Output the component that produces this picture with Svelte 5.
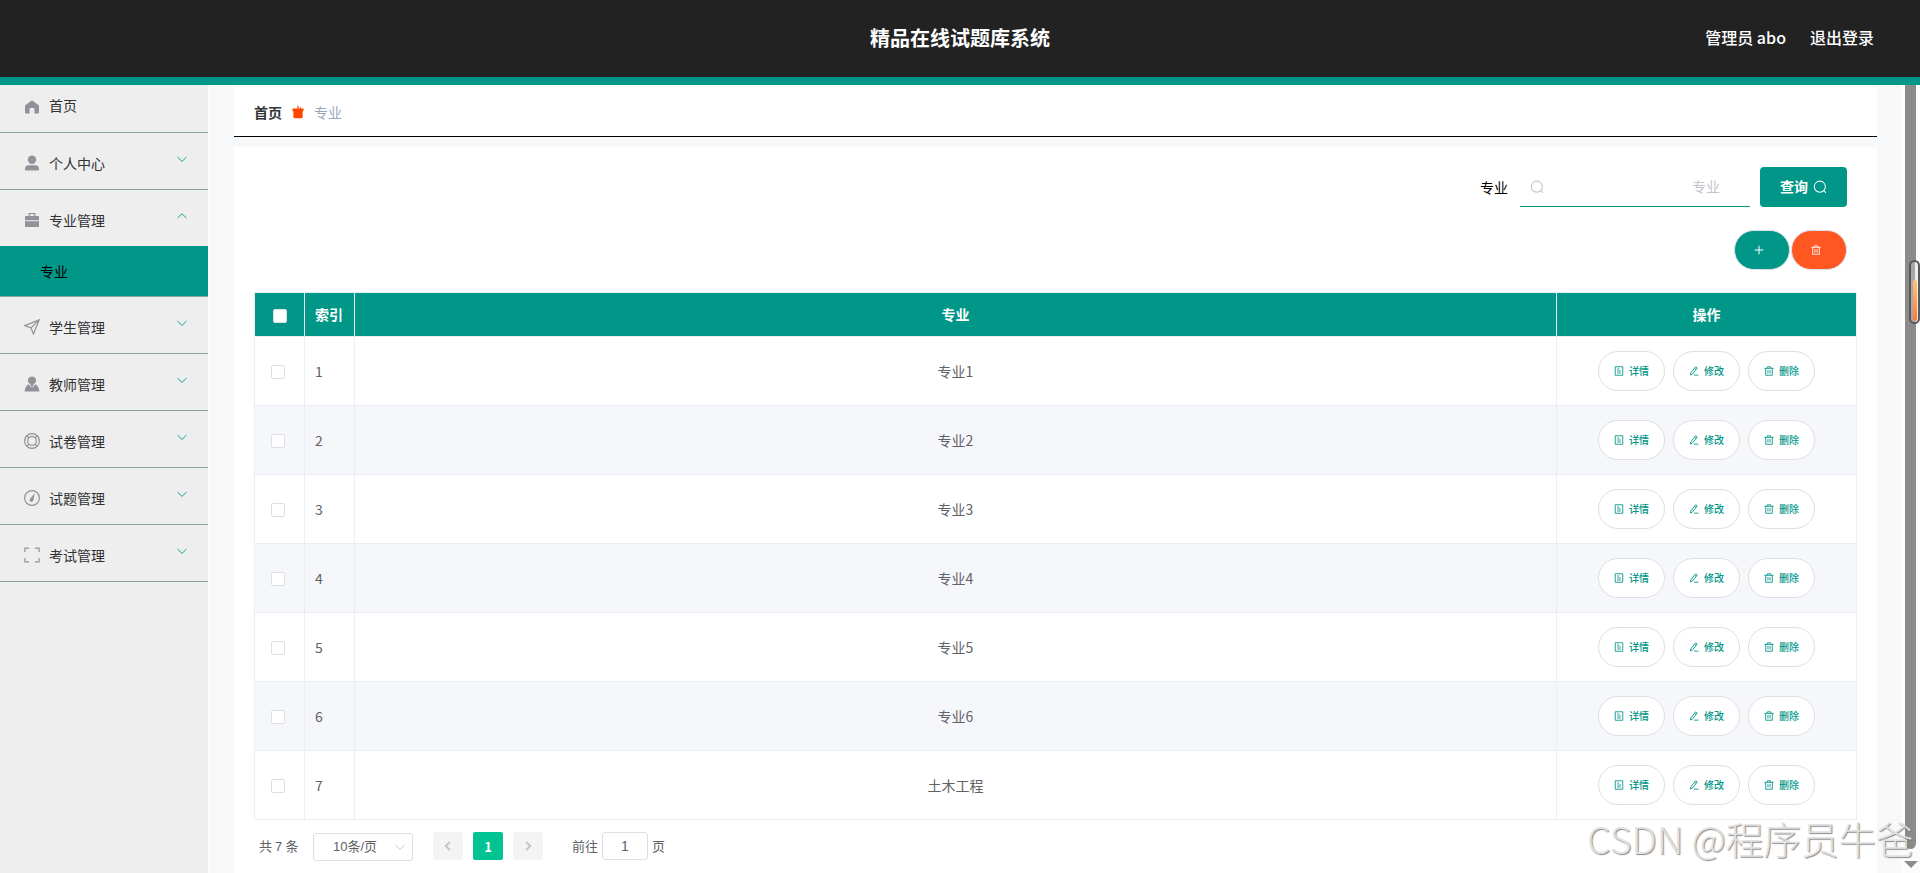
<script lang="ts">
  type MenuItem = { label: string; icon: string; children?: string[] };

  const menu: MenuItem[] = [
    { label: '个人中心', icon: 'user' },
    { label: '专业管理', icon: 'briefcase', children: ['专业'] },
    { label: '学生管理', icon: 'position' },
    { label: '教师管理', icon: 'custom' },
    { label: '试卷管理', icon: 'help' },
    { label: '试题管理', icon: 'odometer' },
    { label: '考试管理', icon: 'full-screen' },
  ];

  const rows = ['专业1', '专业2', '专业3', '专业4', '专业5', '专业6', '土木工程'];

  const actions = [
    { label: '详情', icon: 'tickets' },
    { label: '修改', icon: 'edit' },
    { label: '删除', icon: 'delete' },
  ];

  let open = $state('专业管理');
  let keyword = $state('');
  let page = $state('1');

  const toggle = (label: string) => {
    open = open === label ? '' : label;
  };
</script>

{#snippet icon(name: string, size: number)}
  <svg
    class="icon"
    width={size}
    height={size}
    viewBox="0 0 16 16"
    fill="none"
    stroke="currentColor"
    stroke-width="1.2"
  >
    {#if name === 'home'}
      <path fill="currentColor" stroke="none" d="M8 1.2 1.6 6.1a1.5 1.5 0 0 0-.6 1.2v6.2c0 .6.4 1 1 1h3.6V10c0-.6.4-1 1-1h2.8c.6 0 1 .4 1 1v4.5H14c.6 0 1-.4 1-1V7.3a1.5 1.5 0 0 0-.6-1.2z" />
    {:else if name === 'user'}
      <path fill="currentColor" stroke="none" d="M8 .5a4.2 4.2 0 1 1 0 8.4A4.2 4.2 0 0 1 8 .5zM4.5 10.2h7c1.9 0 3.5 1.6 3.5 3.5v1c0 .5-.3.8-.8.8H1.8c-.5 0-.8-.3-.8-.8v-1c0-1.9 1.6-3.5 3.5-3.5z" />
    {:else if name === 'briefcase'}
      <path fill="currentColor" stroke="none" fill-rule="evenodd" d="M4.5 4V1.8c0-.5.3-.8.8-.8h5.4c.5 0 .8.3.8.8V4H14c.6 0 1 .4 1 1v3.3H1V5c0-.6.4-1 1-1zM5.7 4h4.6V2.2H5.7zM1 9.3h14V14c0 .6-.4 1-1 1H2c-.6 0-1-.4-1-1z" />
    {:else if name === 'position'}
      <path d="M15.2.9.9 6.6l6.2 2.3 2.3 6.2zM15.2.9 7.1 8.9" />
    {:else if name === 'custom'}
      <path fill="currentColor" stroke="none" d="M8 .5a4 4 0 0 1 2.3 7.3L8 11.5 5.7 7.8A4 4 0 0 1 8 .5zM4.5 8.3 7 11l1 .8 1-.8 2.5-2.7c2 .9 3.3 3 4 7.2H.5c.7-4.2 2-6.3 4-7.2z" />
    {:else if name === 'help'}
      <circle cx="8" cy="8" r="7.4" />
      <circle cx="8" cy="8" r="4.4" />
      <path d="m2.7 2.7 2.2 2.2m8.4-2.2-2.2 2.2m2.2 8.4-2.2-2.2m-8.4 2.2 2.2-2.2" />
    {:else if name === 'odometer'}
      <circle cx="8" cy="8" r="7.4" />
      <path fill="currentColor" stroke="none" d="M10.8 3.3 9.4 10.1a1.9 1.9 0 1 1-3-1.7z" />
    {:else if name === 'full-screen'}
      <path d="M.9 5V1.1h4.2M10.9 1.1h4.2V5M15.1 11v3.9h-4.2M5.1 14.9H.9V11" />
    {:else if name === 'down'}
      <path d="m2 5.4 6 5.8 6-5.8" />
    {:else if name === 'up'}
      <path d="m2 10.8 6-5.8 6 5.8" />
    {:else if name === 'left'}
      <path stroke-width="2.6" d="M10.5 2.5 5 8l5.5 5.5" />
    {:else if name === 'right'}
      <path stroke-width="2.6" d="M5.5 2.5 11 8l-5.5 5.5" />
    {:else if name === 'goods'}
      <path fill="currentColor" stroke="none" d="M7.2.9h1.4v3h1.5V2.5h1.4v1.4h1.7c1 0 1.5.7 1.3 1.7-.2 1-.6 1.6-1.2 1.8v5.9c0 1.1-.6 1.7-1.7 1.7H4.4c-1.1 0-1.7-.6-1.7-1.7V7.4c-.6-.2-1-.8-1.2-1.8-.2-1 .3-1.7 1.3-1.7h4.4z" />
    {:else if name === 'search'}
      <circle cx="7.8" cy="7.6" r="6.3" />
      <path d="m12.2 12 2.6 2.8" />
    {:else if name === 'plus'}
      <path stroke-width="1.6" d="M8 1v14M1 8h14" />
    {:else if name === 'tickets'}
      <path d="M2 1.2h12v13.6H2zM5 4.8h3.5M5 8h6M5 11.2h6" stroke-width="1.4" />
    {:else if name === 'edit'}
      <path d="m10.7 1.3 2.5 1.9-7.9 9.9-3 1.3.4-3.2zM8.9 3.6l2.6 2M8 14.6h7" stroke-width="1.4" />
    {:else if name === 'delete'}
      <path d="M.5 3.7h15M5.3 3.5V1.3h5.4v2.2M2.7 3.7v11.1h10.6V3.7M6.3 6.5V12M9.7 6.5V12" stroke-width="1.4" />
    {/if}
  </svg>
{/snippet}

<div class="app">
  <header>
    <h1>精品在线试题库系统</h1>
    <div class="account">
      <span>管理员 abo</span>
      <span>退出登录</span>
    </div>
  </header>

  <div class="body">
    <aside>
      <div class="item first">
        {@render icon('home', 16)}
        <span>首页</span>
      </div>
      {#each menu as item}
        <div class="group">
          <!-- svelte-ignore a11y_click_events_have_key_events, a11y_no_static_element_interactions -->
          <div class="item" onclick={() => toggle(item.label)}>
            {@render icon(item.icon, 16)}
            <span>{item.label}</span>
            <i class="arrow">{@render icon(open === item.label ? 'up' : 'down', 12)}</i>
          </div>
          {#if item.children && open === item.label}
            {#each item.children as child}
              <div class="child">{child}</div>
            {/each}
          {/if}
        </div>
      {/each}
    </aside>

    <main>
      <nav class="breadcrumb">
        <b>首页</b>
        <i>{@render icon('goods', 14)}</i>
        <span>专业</span>
      </nav>

      <section class="card">
        <div class="search">
          <label for="keyword">专业</label>
          <div class="field">
            {@render icon('search', 14)}
            <input id="keyword" placeholder="专业" bind:value={keyword} />
          </div>
          <button class="query"><span>查询</span> {@render icon('search', 14)}</button>
        </div>

        <div class="tools">
          <button class="add" aria-label="新增">{@render icon('plus', 10)}</button>
          <button class="remove" aria-label="删除">{@render icon('delete', 10)}</button>
        </div>

        <table>
          <colgroup>
            <col style:width="50px" />
            <col style:width="50px" />
            <col />
            <col style:width="300px" />
          </colgroup>
          <thead>
            <tr>
              <th><i class="check"></i></th>
              <th class="index">索引</th>
              <th>专业</th>
              <th>操作</th>
            </tr>
          </thead>
          <tbody>
            {#each rows as row, i}
              <tr>
                <td class="select"><i class="check"></i></td>
                <td class="index">{i + 1}</td>
                <td>{row}</td>
                <td>
                  <div class="actions">
                    {#each actions as action}
                      <button>{@render icon(action.icon, 10)}<span>{action.label}</span></button>
                    {/each}
                  </div>
                </td>
              </tr>
            {/each}
          </tbody>
        </table>

        <div class="pagination">
          <span class="total">共 {rows.length} 条</span>
          <div class="size">
            <span>10条/页</span>
            {@render icon('down', 12)}
          </div>
          <button aria-label="上一页">{@render icon('left', 12)}</button>
          <button class="current">1</button>
          <button aria-label="下一页">{@render icon('right', 12)}</button>
          <span class="goto">前往</span>
          <input aria-label="页码" bind:value={page} />
          <span>页</span>
        </div>
      </section>
    </main>

    <div class="scrollbar">
      <div class="track"></div>
      <div class="down"></div>
      <div class="meter"><div></div></div>
    </div>
  </div>

  <div class="watermark">CSDN @程序员牛爸</div>
</div>

<style>
  :global(body) {
    overflow: hidden;
  }
  .app {
    position: relative;
    display: flex;
    flex-direction: column;
    height: 873px;
    overflow: hidden;
    font-family: 'Noto Sans CJK SC', sans-serif;
    font-size: 14px;
    color: #333;
    background: #fcfcfd;
  }
  .app * {
    box-sizing: border-box;
  }
  .icon {
    display: block;
    flex: none;
  }
  i {
    font-style: normal;
  }
  button,
  input {
    margin: 0;
    padding: 0;
    border: none;
    outline: none;
    font-family: inherit;
  }

  header {
    display: grid;
    grid-template-columns: 1fr auto 1fr;
    align-items: center;
    flex: none;
    height: 85px;
    padding: 0 46px 2px;
    background: #222;
    border-bottom: 8px solid #009688;
    color: #fff;
  }
  h1 {
    grid-column: 2;
    margin: 0;
    font-size: 20px;
    line-height: 30px;
  }
  .account {
    display: flex;
    justify-content: flex-end;
    gap: 24px;
    padding-bottom: 2px;
    font-size: 16px;
    font-weight: 500;
  }

  .body {
    display: flex;
    flex: 1;
    min-height: 0;
  }
  aside {
    width: 208px;
    margin-right: 2px;
    flex: none;
    background: #eee;
  }
  .item {
    display: flex;
    align-items: center;
    height: 56px;
    padding: 5px 20px 0 24px;
    color: #303133;
  }
  .item > .icon {
    margin-right: 9px;
    margin-bottom: 1px;
    color: #909399;
  }
  .item span {
    padding-bottom: 2px;
  }
  .item.first {
    height: 48px;
    padding-top: 0;
    padding-bottom: 5px;
    border-bottom: 1px solid #8aa39b;
  }
  .item.first .icon {
    margin-top: 3px;
  }
  .item.first span {
    line-height: 20px;
  }
  .group {
    border-bottom: 1px solid #8aa39b;
  }
  .arrow {
    margin-left: auto;
    margin-bottom: 9px;
    color: #009688;
  }
  .child {
    height: 50px;
    padding-left: 40px;
    line-height: 51px;
    background: #009688;
    color: #000;
  }

  main {
    display: flex;
    flex-direction: column;
    flex: 1;
    padding: 2px 24px 0;
    background: #f7f8fa;
  }
  .breadcrumb {
    display: flex;
    align-items: center;
    flex: none;
    height: 50px;
    padding: 1px 20px 0;
    margin-bottom: 10px;
    background: #fff;
    border-bottom: 1px solid #000;
  }
  .breadcrumb i {
    margin: 0 9px;
    color: #ff4500;
  }
  .breadcrumb span {
    color: #97a8be;
  }

  .card {
    flex: 1;
    padding: 20px 20px 0;
    background: #fff;
  }
  .search {
    display: flex;
    align-items: center;
    justify-content: flex-end;
    height: 40px;
    padding-right: 10px;
    color: #000;
  }
  .field {
    display: flex;
    align-items: center;
    width: 230px;
    height: 40px;
    margin: 0 10px 0 12px;
    padding: 0 30px 0 10px;
    border-bottom: 1px solid #009688;
    color: #c0c4cc;
  }
  .field input {
    width: 176px;
    padding-bottom: 2px;
    font-size: 14px;
    text-align: right;
    background: none;
  }
  .field input::placeholder {
    color: #c0c4cc;
  }
  .query {
    display: flex;
    align-items: center;
    justify-content: center;
    gap: 5px;
    width: 87px;
    height: 40px;
    border-radius: 4px;
    background: #009688;
    color: #fff;
    font-size: 14px;
    font-weight: 700;
  }
  .query span {
    padding-bottom: 2px;
  }

  .tools {
    display: flex;
    justify-content: flex-end;
    gap: 1px;
    margin: 23px 10.5px 22px 0;
  }
  .tools button {
    display: flex;
    align-items: center;
    justify-content: center;
    width: 56px;
    height: 40px;
    padding-right: 5px;
    border: 1px solid #dcdfe6;
    border-radius: 20px;
    color: #fff;
  }
  .add {
    background: #009688;
  }
  .remove {
    background: #ff5722;
  }

  table {
    width: 1603px;
    table-layout: fixed;
    border-collapse: collapse;
    color: #606266;
  }
  th,
  td {
    padding: 0;
    border: 1px solid #ebeef5;
    text-align: center;
    line-height: 23px;
  }
  th {
    height: 44px;
    padding-bottom: 1px;
    background: #009688;
    color: #fff;
  }
  td {
    height: 69px;
  }
  tbody tr:nth-child(even) {
    background: #f5f7fa;
  }
  .index {
    padding-left: 10px;
    text-align: left;
  }
  .check {
    display: inline-block;
    width: 14px;
    height: 14px;
    border: 1px solid #dcdfe6;
    border-radius: 2px;
    background: #fff;
    vertical-align: middle;
  }
  .select {
    padding: 0 3px 2px 0;
  }
  .actions {
    display: flex;
    justify-content: center;
    gap: 8px;
  }
  .actions button {
    display: flex;
    align-items: center;
    justify-content: center;
    gap: 5px;
    width: 67px;
    height: 40px;
    border: 1px solid #dcdfe6;
    border-radius: 20px;
    background: #fff;
    color: #009688;
    font-size: 10px;
    font-weight: 500;
  }
  .actions span {
    padding-bottom: 1px;
  }

  .pagination {
    display: flex;
    align-items: center;
    height: 28px;
    margin-top: 12px;
    padding-left: 5px;
    font-family: 'Liberation Sans', 'Noto Sans CJK SC', sans-serif;
    font-size: 13px;
    color: #606266;
  }
  .pagination span {
    padding-bottom: 2px;
  }
  .total {
    width: 54px;
    word-spacing: -0.5px;
  }
  .size {
    display: flex;
    align-items: center;
    width: 100px;
    height: 28px;
    margin: 2px 20px 0 0;
    padding: 0 6px 0 19px;
    border: 1px solid #dcdfe6;
    border-radius: 3px;
  }
  .pagination .size span {
    padding-bottom: 4px;
  }
  .size .icon {
    margin-left: auto;
    color: #c0c4cc;
  }
  .pagination button {
    display: flex;
    align-items: center;
    justify-content: center;
    width: 30px;
    height: 28px;
    margin-right: 10px;
    border-radius: 2px;
    background: #f4f4f5;
    color: #c0c4cc;
  }
  .pagination .current {
    background: #00c292;
    color: #fff;
    font-family: 'Noto Sans CJK SC', sans-serif;
    font-size: 13px;
    font-weight: 700;
  }
  .goto {
    margin-left: 19px;
  }
  .pagination input {
    width: 46px;
    height: 28px;
    margin: 0 4px;
    border: 1px solid #dcdfe6;
    border-radius: 3px;
    color: #606266;
    font-size: 14px;
    text-align: center;
  }

  .scrollbar {
    position: relative;
    width: 19px;
    flex: none;
    padding-left: 4px;
  }
  .track {
    width: 11px;
    height: 764px;
    border-radius: 0 0 6px 6px;
    background: #8b8b8b;
  }
  .down {
    width: 14px;
    height: 7px;
    margin: 12px 0 0 -1px;
    background: #8b8b8b;
    clip-path: polygon(0 0, 100% 0, 50% 100%);
  }
  .meter {
    position: absolute;
    top: 175px;
    left: 8px;
    display: flex;
    align-items: flex-end;
    width: 11px;
    height: 64px;
    padding: 1px;
    border: 2px solid #58595b;
    border-radius: 6px;
    background: linear-gradient(90deg, #a8a8a8 60%, #eee 60%);
  }
  .meter div {
    width: 4px;
    height: 41px;
    margin-left: 1px;
    border-radius: 2px;
    background: linear-gradient(#ffc27a, #ff7a33);
  }

  .watermark {
    position: absolute;
    top: 812px;
    left: 1587px;
    font-size: 37.6px;
    font-weight: 300;
    line-height: 52px;
    white-space: nowrap;
    color: rgba(228, 228, 228, 0.95);
    text-shadow: 1px 1px 1px rgba(110, 110, 110, 0.8);
  }
</style>
